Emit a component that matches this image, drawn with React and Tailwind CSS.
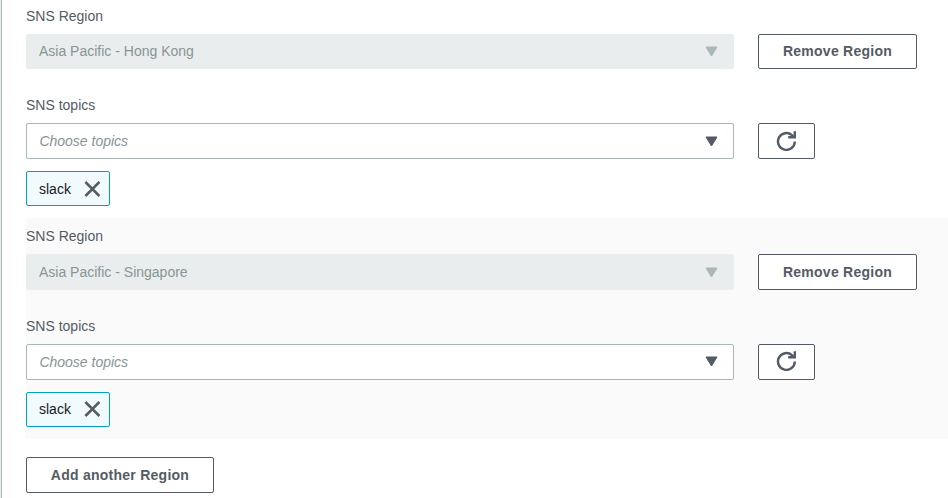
import React from 'react';

const CaretIcon = ({ className }) => (
  <svg viewBox="0 0 13 11" className={`w-[13px] h-[11px] ${className}`} fill="currentColor" stroke="currentColor">
    <path d="M1 1h11L6.5 10z" strokeWidth="1" strokeLinejoin="round" />
  </svg>
);

const RefreshIcon = () => (
  <svg viewBox="0 0 20 20" className="w-5 h-5 -ml-px mb-[0.4px]" fill="none" stroke="currentColor" strokeWidth="2.4">
    <path d="M18.8 10.4a8.4 8.4 0 1 1-2.9-6.3l1.8 1.8" />
    <path d="M18.8 0.2v6h-6.6" />
  </svg>
);

const CloseIcon = () => (
  <svg viewBox="0 0 16 16" className="w-4 h-4" fill="none" stroke="currentColor" strokeWidth="2.5">
    <path d="M1.4 1l14 14M15.4 1l-14 14" />
  </svg>
);

const Label = ({ children }) => (
  <div className="flex items-center h-[36px] leading-[22px]">{children}</div>
);

const Button = ({ className, children }) => (
  <button
    className={`flex items-center justify-center h-[35.8px] border border-[#545b64] rounded-[2px] bg-white font-bold tracking-[0.25px] ${className}`}
  >
    {children}
  </button>
);

const RegionGroup = ({ region, topic, className }) => (
  <div className={`h-[220.5px] ${className}`}>
    <Label>SNS Region</Label>
    <div className="flex gap-6">
      <div className="flex items-center justify-between w-[708px] h-[35.8px] pl-[13px] pr-4 rounded-[2px] bg-[#eaeded] text-[#879596]">
        <span>{region}</span>
        <CaretIcon className="mt-[0.3px] text-[#aab7b8]" />
      </div>
      <Button className="w-[159px]">Remove Region</Button>
    </div>

    <div className="mt-[17.9px]">
      <Label>SNS topics</Label>
    </div>
    <div className="flex gap-6">
      <div className="flex items-center justify-between w-[708px] h-[35.8px] pl-[12.4px] pr-[15px] border border-[#aab7b8] rounded-[2px] bg-white">
        <span className="italic text-[#879596]">Choose topics</span>
        <CaretIcon className="text-[#545b64]" />
      </div>
      <Button className="w-[57px]">
        <RefreshIcon />
      </Button>
    </div>

    <div className="mt-3 flex items-center justify-between w-[84px] h-[35.2px] pl-3 pr-[9px] border border-[#00a1c9] rounded-[2px] bg-[#f1faff]">
      <span className="text-[#16191f]">{topic}</span>
      <CloseIcon />
    </div>
  </div>
);

const App = () => {
  const groups = [
    { id: 1, region: 'Asia Pacific - Hong Kong', topic: 'slack', className: '-mt-[2.45px]' },
    { id: 2, region: 'Asia Pacific - Singapore', topic: 'slack', className: 'bg-[#fafafa]' },
  ];

  return (
    <div className="flex w-[948px] h-[498px] overflow-hidden bg-white font-['Liberation_Sans',Arial,sans-serif] text-[14px] leading-[22px] text-[#545b64]">
      <div className="w-0.5 h-full shrink-0 border-r border-[#aab7b8] bg-[#eaeded]" />
      <div className="flex-1 pl-6">
        {groups.map((group) => (
          <RegionGroup key={group.id} region={group.region} topic={group.topic} className={group.className} />
        ))}
        <Button className="mt-[18.4px] w-[188px]">Add another Region</Button>
      </div>
    </div>
  );
};

export default App;
